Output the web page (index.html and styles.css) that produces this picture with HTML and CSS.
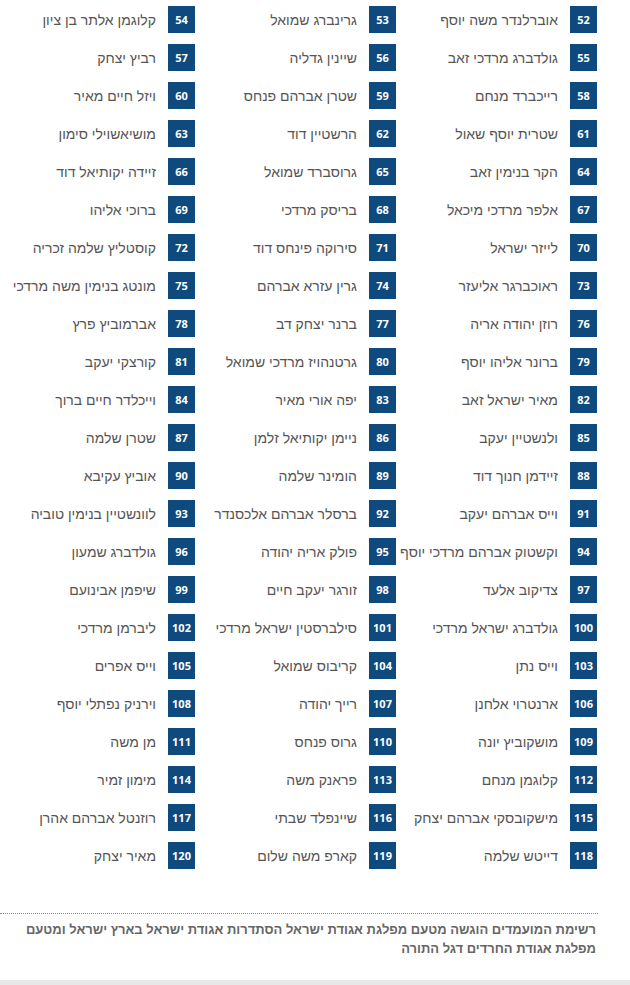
FILE: index.html
```html
<!DOCTYPE html>
<html lang="he" dir="rtl">
<head>
<meta charset="utf-8">
<title>רשימת המועמדים</title>
<link rel="stylesheet" href="styles.css">
</head>
<body>
<div class="list">
  <div class="item"><span class="num">52</span><span class="name">אוברלנדר משה יוסף</span></div>
  <div class="item"><span class="num">53</span><span class="name">גרינברג שמואל</span></div>
  <div class="item"><span class="num">54</span><span class="name">קלוגמן אלתר בן ציון</span></div>
  <div class="item"><span class="num">55</span><span class="name">גולדברג מרדכי זאב</span></div>
  <div class="item"><span class="num">56</span><span class="name">שיינין גדליה</span></div>
  <div class="item"><span class="num">57</span><span class="name">רביץ יצחק</span></div>
  <div class="item"><span class="num">58</span><span class="name">רייכברד מנחם</span></div>
  <div class="item"><span class="num">59</span><span class="name">שטרן אברהם פנחס</span></div>
  <div class="item"><span class="num">60</span><span class="name">ויזל חיים מאיר</span></div>
  <div class="item"><span class="num">61</span><span class="name">שטרית יוסף שאול</span></div>
  <div class="item"><span class="num">62</span><span class="name">הרשטיין דוד</span></div>
  <div class="item"><span class="num">63</span><span class="name">מושיאשוילי סימון</span></div>
  <div class="item"><span class="num">64</span><span class="name">הקר בנימין זאב</span></div>
  <div class="item"><span class="num">65</span><span class="name">גרוסברד שמואל</span></div>
  <div class="item"><span class="num">66</span><span class="name">זיידה יקותיאל דוד</span></div>
  <div class="item"><span class="num">67</span><span class="name">אלפר מרדכי מיכאל</span></div>
  <div class="item"><span class="num">68</span><span class="name">בריסק מרדכי</span></div>
  <div class="item"><span class="num">69</span><span class="name">ברוכי אליהו</span></div>
  <div class="item"><span class="num">70</span><span class="name">לייזר ישראל</span></div>
  <div class="item"><span class="num">71</span><span class="name">סירוקה פינחס דוד</span></div>
  <div class="item"><span class="num">72</span><span class="name">קוסטליץ שלמה זכריה</span></div>
  <div class="item"><span class="num">73</span><span class="name">ראוכברגר אליעזר</span></div>
  <div class="item"><span class="num">74</span><span class="name">גרין עזרא אברהם</span></div>
  <div class="item"><span class="num">75</span><span class="name">מונטג בנימין משה מרדכי</span></div>
  <div class="item"><span class="num">76</span><span class="name">רוזן יהודה אריה</span></div>
  <div class="item"><span class="num">77</span><span class="name">ברנר יצחק דב</span></div>
  <div class="item"><span class="num">78</span><span class="name">אברמוביץ פרץ</span></div>
  <div class="item"><span class="num">79</span><span class="name">ברונר אליהו יוסף</span></div>
  <div class="item"><span class="num">80</span><span class="name">גרטנהויז מרדכי שמואל</span></div>
  <div class="item"><span class="num">81</span><span class="name">קורצקי יעקב</span></div>
  <div class="item"><span class="num">82</span><span class="name">מאיר ישראל זאב</span></div>
  <div class="item"><span class="num">83</span><span class="name">יפה אורי מאיר</span></div>
  <div class="item"><span class="num">84</span><span class="name">וייכלדר חיים ברוך</span></div>
  <div class="item"><span class="num">85</span><span class="name">ולנשטיין יעקב</span></div>
  <div class="item"><span class="num">86</span><span class="name">ניימן יקותיאל זלמן</span></div>
  <div class="item"><span class="num">87</span><span class="name">שטרן שלמה</span></div>
  <div class="item"><span class="num">88</span><span class="name">זיידמן חנוך דוד</span></div>
  <div class="item"><span class="num">89</span><span class="name">הומינר שלמה</span></div>
  <div class="item"><span class="num">90</span><span class="name">אוביץ עקיבא</span></div>
  <div class="item"><span class="num">91</span><span class="name">וייס אברהם יעקב</span></div>
  <div class="item"><span class="num">92</span><span class="name">ברסלר אברהם אלכסנדר</span></div>
  <div class="item"><span class="num">93</span><span class="name">לוונשטיין בנימין טוביה</span></div>
  <div class="item"><span class="num">94</span><span class="name">וקשטוק אברהם מרדכי יוסף</span></div>
  <div class="item"><span class="num">95</span><span class="name">פולק אריה יהודה</span></div>
  <div class="item"><span class="num">96</span><span class="name">גולדברג שמעון</span></div>
  <div class="item"><span class="num">97</span><span class="name">צדיקוב אלעד</span></div>
  <div class="item"><span class="num">98</span><span class="name">זורגר יעקב חיים</span></div>
  <div class="item"><span class="num">99</span><span class="name">שיפמן אבינועם</span></div>
  <div class="item"><span class="num">100</span><span class="name">גולדברג ישראל מרדכי</span></div>
  <div class="item"><span class="num">101</span><span class="name">סילברסטין ישראל מרדכי</span></div>
  <div class="item"><span class="num">102</span><span class="name">ליברמן מרדכי</span></div>
  <div class="item"><span class="num">103</span><span class="name">וייס נתן</span></div>
  <div class="item"><span class="num">104</span><span class="name">קריבוס שמואל</span></div>
  <div class="item"><span class="num">105</span><span class="name">וייס אפרים</span></div>
  <div class="item"><span class="num">106</span><span class="name">ארנטרוי אלחנן</span></div>
  <div class="item"><span class="num">107</span><span class="name">רייך יהודה</span></div>
  <div class="item"><span class="num">108</span><span class="name">וירניק נפתלי יוסף</span></div>
  <div class="item"><span class="num">109</span><span class="name">מושקוביץ יונה</span></div>
  <div class="item"><span class="num">110</span><span class="name">גרוס פנחס</span></div>
  <div class="item"><span class="num">111</span><span class="name">מן משה</span></div>
  <div class="item"><span class="num">112</span><span class="name">קלוגמן מנחם</span></div>
  <div class="item"><span class="num">113</span><span class="name">פראנק משה</span></div>
  <div class="item"><span class="num">114</span><span class="name">מימון זמיר</span></div>
  <div class="item"><span class="num">115</span><span class="name">מישקובסקי אברהם יצחק</span></div>
  <div class="item"><span class="num">116</span><span class="name">שיינפלד שבתי</span></div>
  <div class="item"><span class="num">117</span><span class="name">רוזנטל אברהם אהרן</span></div>
  <div class="item"><span class="num">118</span><span class="name">דייטש שלמה</span></div>
  <div class="item"><span class="num">119</span><span class="name">קארפ משה שלום</span></div>
  <div class="item"><span class="num">120</span><span class="name">מאיר יצחק</span></div>
</div>
<div class="note">רשימת המועמדים הוגשה מטעם מפלגת אגודת ישראל הסתדרות אגודת ישראל בארץ ישראל ומטעם מפלגת אגודת החרדים דגל התורה</div>
<div class="bottom-bar"></div>
</body>
</html>
```

FILE: styles.css
```css
html, body {
  margin: 0;
  padding: 0;
  background: #ffffff;
}

body {
  direction: rtl;
  font-family: "Liberation Sans", Arial, "DejaVu Sans", sans-serif;
  color: #555555;
}

.list {
  display: grid;
  grid-template-columns: repeat(3, 201px);
  row-gap: 11px;
  padding: 6px 33px 0 0;
}

.item {
  display: flex;
  align-items: center;
  gap: 12px;
  height: 27px;
}

.num {
  flex: none;
  width: 27px;
  height: 27px;
  display: flex;
  align-items: center;
  justify-content: center;
  background: #0f4a7e;
  color: #ffffff;
  font-family: "Open Sans", "DejaVu Sans", sans-serif;
  font-weight: 700;
  font-size: 11px;
  direction: ltr;
}

.name {
  font-size: 14px;
  color: #555555;
  white-space: nowrap;
}

.note {
  margin: 44px 32px 0 0;
  border-top: 1px dotted #7f8fa3;
  padding: 6px 2px 0 0;
  font-size: 13px;
  font-weight: 700;
  line-height: 19px;
  color: #666666;
}

.bottom-bar {
  margin-top: 22px;
  height: 10px;
  background: #e8e8e8;
}
```
